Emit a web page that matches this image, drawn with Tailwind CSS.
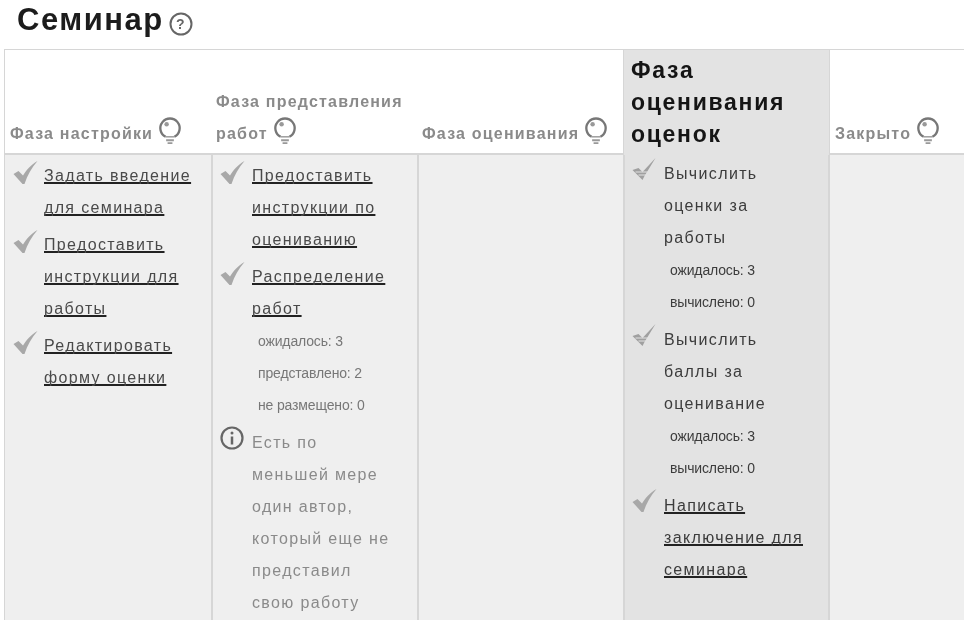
<!DOCTYPE html>
<html lang="ru">
<head>
    <meta charset="UTF-8">
    <meta name="viewport" content="width=device-width, initial-scale=1.0">
    <title>Семинар</title>
    <script src="https://cdn.jsdelivr.net/npm/@tailwindcss/browser@4"></script>
</head>
<body class="h-[620px] w-[966px] overflow-hidden bg-white font-['Liberation_Sans',Arial,sans-serif] text-[#4a4a4a]">
    <svg width="0" height="0" class="absolute">
        <defs>
            <symbol id="bulb" viewBox="0 0 24 30">
                <path d="M7.500 20.500 A10 10 0 1 1 16.500 20.500" fill="none" stroke="#777" stroke-width="2.400"/>
                <path d="M7.500 20.500h9" stroke="#999" stroke-width="1.500"/>
                <circle cx="8.500" cy="7.500" r="2.300" fill="#999"/>
                <path d="M8 24h8M9.500 27h5" stroke="#999" stroke-width="2"/>
            </symbol>
            <symbol id="check" viewBox="0 0 24 24">
                <path d="M0 13 L5 10 L9.500 14.500 C13 9 17 4 24 0 C18 7 14 14 11 23 L9 23 Z" fill="#a8a8a8"/>
            </symbol>
            <symbol id="check-thin" viewBox="0 0 24 24">
                <path d="M0 13 L6 11 L10 15 L23 1 L12 19 L10 23 Z" fill="#a0a0a0"/>
                <path d="M3 15h12M6 18h8" stroke="#e3e3e3" stroke-width="1"/>
            </symbol>
        </defs>
    </svg>

    <div class="blur-[0.6px]">
        <h1 class="flex items-center h-[40px] pl-[17px] text-[31px] leading-[40px] font-bold tracking-[1.5px] text-[#1c1c1c]">
            Семинар
            <svg class="w-[24px] h-[24px] ml-[5px] mt-[7px]" viewBox="0 0 24 24">
                <circle cx="12" cy="12" r="10.500" fill="#fff" stroke="#666" stroke-width="2"/>
                <text x="12" y="17" text-anchor="middle" font-size="14" font-weight="700" fill="#666" font-family="Liberation Sans">?</text>
            </svg>
        </h1>

        <div class="mt-[9px] ml-[4px] grid grid-cols-[207px_206px_206px_207px_134px] grid-rows-[106px_465px] text-[16px] tracking-[1.35px]">
            <!-- header row -->
            <div class="flex items-end border-t border-l border-b-2 border-[#d6d6d6] pl-[5px] pb-[3px] font-bold text-[#8a8a8a] leading-[32px] tracking-[1.2px]">
                <span class="flex items-center h-[32px]">Фаза настройки<svg class="w-[24px] h-[29px] ml-[5px] mb-[5px]"><use href="#bulb"/></svg></span>
            </div>
            <div class="flex items-end border-t border-b-2 border-[#d6d6d6] pl-[5px] pb-[3px] font-bold text-[#8a8a8a] leading-[32px] tracking-[1.2px]">
                <div>
                    <div>Фаза представления</div>
                    <span class="flex items-center h-[32px]">работ<svg class="w-[24px] h-[29px] ml-[5px] mb-[5px]"><use href="#bulb"/></svg></span>
                </div>
            </div>
            <div class="flex items-end border-t border-b-2 border-[#d6d6d6] pl-[5px] pb-[3px] font-bold text-[#8a8a8a] leading-[32px] tracking-[1.2px]">
                <span class="flex items-center h-[32px]">Фаза оценивания<svg class="w-[24px] h-[29px] ml-[5px] mb-[5px]"><use href="#bulb"/></svg></span>
            </div>
            <div class="border-t border-x border-[#d6d6d6] bg-[#e3e3e3] pl-[7px] pt-[4px] text-[23px] leading-[32px] font-bold text-[#151515] tracking-[1.7px]">
                Фаза оценивания оценок
            </div>
            <div class="flex items-end border-t border-b-2 border-[#d6d6d6] pl-[5px] pb-[3px] font-bold text-[#8a8a8a] leading-[32px] tracking-[1.2px]">
                <span class="flex items-center h-[32px]">Закрыто<svg class="w-[24px] h-[29px] ml-[5px] mb-[5px]"><use href="#bulb"/></svg></span>
            </div>

            <!-- setup phase -->
            <div class="border-l border-[#d6d6d6] bg-[#efefef] pl-[8px] pt-[5px] leading-[32px]">
                <div class="flex items-start">
                    <svg class="w-[25px] h-[24px] mt-[1px] mr-[6px] shrink-0"><use href="#check"/></svg>
                    <a class="underline underline-offset-1 decoration-[1.500px] decoration-[#222] [text-decoration-skip-ink:none] pr-[15px]">Задать введение для семинара</a>
                </div>
                <div class="flex items-start pt-[5px]">
                    <svg class="w-[25px] h-[24px] mt-[1px] mr-[6px] shrink-0"><use href="#check"/></svg>
                    <a class="underline underline-offset-1 decoration-[1.500px] decoration-[#222] [text-decoration-skip-ink:none] pr-[15px]">Предоставить инструкции для работы</a>
                </div>
                <div class="flex items-start pt-[5px]">
                    <svg class="w-[25px] h-[24px] mt-[1px] mr-[6px] shrink-0"><use href="#check"/></svg>
                    <a class="underline underline-offset-1 decoration-[1.500px] decoration-[#222] [text-decoration-skip-ink:none] pr-[15px]">Редактировать форму оценки</a>
                </div>
            </div>

            <!-- submission phase -->
            <div class="border-l-2 border-[#d6d6d6] bg-[#efefef] pl-[7px] pt-[5px] leading-[32px]">
                <div class="flex items-start">
                    <svg class="w-[25px] h-[24px] mt-[1px] mr-[7px] shrink-0"><use href="#check"/></svg>
                    <a class="underline underline-offset-1 decoration-[1.500px] decoration-[#222] [text-decoration-skip-ink:none] pr-[20px]">Предоставить инструкции по оцениванию</a>
                </div>
                <div class="flex items-start pt-[5px]">
                    <svg class="w-[25px] h-[24px] mt-[1px] mr-[7px] shrink-0"><use href="#check"/></svg>
                    <a class="underline underline-offset-1 decoration-[1.500px] decoration-[#222] [text-decoration-skip-ink:none] pr-[20px]">Распределение работ</a>
                </div>
                <div class="pl-[38px] text-[14px] tracking-[-0.15px] text-[#777]">
                    <div>ожидалось: 3</div>
                    <div>представлено: 2</div>
                    <div>не размещено: 0</div>
                </div>
                <div class="flex items-start pt-[6px] text-[#8a8a8a]">
                    <svg class="w-[24px] h-[24px] mt-[-1px] mr-[8px] shrink-0" viewBox="0 0 24 24">
                        <circle cx="12" cy="12" r="10.500" fill="none" stroke="#666" stroke-width="2.200"/>
                        <circle cx="12" cy="7" r="1.500" fill="#666"/>
                        <path d="M12 10.500v8" stroke="#666" stroke-width="2.500"/>
                    </svg>
                    <span class="pr-[20px]">Есть по меньшей мере один автор, который еще не представил свою работу</span>
                </div>
            </div>

            <!-- assessment phase -->
            <div class="border-l-2 border-[#d6d6d6] bg-[#efefef]"></div>

            <!-- grading evaluation phase -->
            <div class="border-x-2 border-[#d6d6d6] bg-[#e3e3e3] pl-[7px] pt-[3px] leading-[32px] text-[#3c3c3c]">
                <div class="flex items-start">
                    <svg class="w-[25px] h-[24px] mt-[-1px] mr-[7px] shrink-0"><use href="#check-thin"/></svg>
                    <span class="pr-[21px]">Вычислить оценки за работы</span>
                </div>
                <div class="pl-[38px] text-[14px] tracking-[-0.15px]">
                    <div>ожидалось: 3</div>
                    <div>вычислено: 0</div>
                </div>
                <div class="flex items-start pt-[6px]">
                    <svg class="w-[25px] h-[24px] mt-[-1px] mr-[7px] shrink-0"><use href="#check-thin"/></svg>
                    <span class="pr-[21px]">Вычислить баллы за оценивание</span>
                </div>
                <div class="pl-[38px] text-[14px] tracking-[-0.15px]">
                    <div>ожидалось: 3</div>
                    <div>вычислено: 0</div>
                </div>
                <div class="flex items-start pt-[6px]">
                    <svg class="w-[25px] h-[24px] mt-[-1px] mr-[7px] shrink-0"><use href="#check"/></svg>
                    <a class="underline underline-offset-1 decoration-[1.500px] decoration-[#222] [text-decoration-skip-ink:none] pr-[21px]">Написать заключение для семинара</a>
                </div>
            </div>

            <!-- closed -->
            <div class="bg-[#efefef]"></div>
        </div>
    </div>
</body>
</html>
